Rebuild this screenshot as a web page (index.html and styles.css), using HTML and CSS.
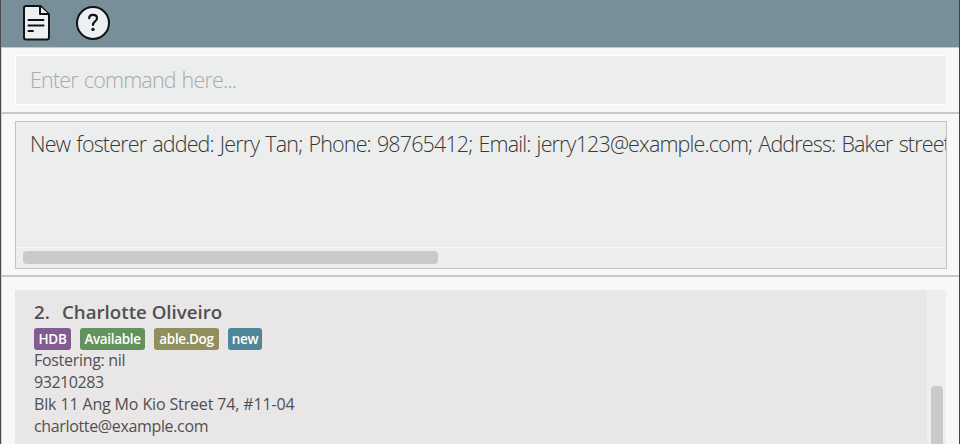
FILE: index.html
```html
<!DOCTYPE html>
<html lang="en">
<head>
<meta charset="utf-8">
<title>Address book</title>
<link rel="stylesheet" href="styles.css">
</head>
<body>
<div class="window">
  <header class="toolbar">
    <svg class="icon-file" width="29" height="36" viewBox="0 0 29 36">
      <path d="M4 1H18.500L27 9.500V32.500a2 2 0 0 1-2 2H4a2 2 0 0 1-2-2V3a2 2 0 0 1 2-2Z"/>
      <path d="M18 1.200V9H26.500M6.500 15H21.500M6.500 20.500H21.500M6.500 26H11"/>
    </svg>
    <svg class="icon-help" width="36" height="36" viewBox="0 0 36 36">
      <circle cx="18" cy="18" r="16"/>
      <path d="M14.200 13.200C14.200 8.700 22 8.700 22 13.200C22 16.700 18 16.200 18 20"/>
      <circle class="dot" cx="18" cy="24.400" r="1.700"/>
    </svg>
  </header>
  <section class="command">
    <input class="command-input" placeholder="Enter command here...">
  </section>
  <section class="result">
    <div class="result-box">
      <div class="result-text">New fosterer added: Jerry Tan; Phone: 98765412; Email: jerry123@example.com; Address: Baker street</div>
      <div class="hbar"><div class="hthumb"></div></div>
    </div>
  </section>
  <section class="list">
    <article class="card">
      <h2 class="name"><span class="num">2.</span><span>Charlotte Oliveiro</span></h2>
      <div class="tags">
        <span class="tag hdb">HDB</span>
        <span class="tag available">Available</span>
        <span class="tag dog">able.Dog</span>
        <span class="tag new">new</span>
      </div>
      <p class="line fostering">Fostering: nil</p>
      <p class="line phone">93210283</p>
      <p class="line address">Blk 11 Ang Mo Kio Street 74, #11-04</p>
      <p class="line email">charlotte@example.com</p>
    </article>
    <div class="vbar"><div class="vthumb"></div></div>
  </section>
</div>
</body>
</html>
```
FILE: styles.css
```css
* { box-sizing: border-box; }
body { margin: 0; overflow: hidden; font-family: "Open Sans", "Noto Sans", sans-serif; }
.window { width: 960px; height: 444px; display: flex; flex-direction: column; background: #f8f8f8; border-left: 1px solid #4c4a4c; border-right: 1px solid #454545; overflow: hidden; }
.toolbar { height: 47px; flex: none; display: flex; gap: 24px; padding: 5px 0 0 21px; background: #788f9a; }
svg { display: block; fill: #ecf0f2; stroke: #101416; stroke-width: 2; stroke-linecap: round; stroke-linejoin: round; }
.icon-help path { fill: none; stroke-width: 2.2; }
.icon-help .dot { fill: #101416; stroke: none; }
.command { height: 67px; flex: none; padding: 7px 12px 0 14px; border-top: 1px solid #c8c8c8; border-left: 1px solid #d4d4d4; border-bottom: 2px solid #c8c8c8; }
.command-input { display: block; width: 100%; height: 50px; border: 1px solid #fff; border-radius: 0; padding: 0 14px 2px; background: #ebeeed; font: 300 21.5px "Open Sans", sans-serif; letter-spacing: -.8px; word-spacing: 1px; color: #383838; outline: 0; }
.command-input::placeholder { color: #aaa; opacity: 1; }
.command-input, .result-box { margin-left: -1px; width: 932px; }
.result { height: 163px; flex: none; padding: 7px 12px 0 14px; border-left: 1px solid #d4d4d4; border-bottom: 2px solid #c8c8c8; }
.result-box { height: 148px; border: 1px solid #c3c3c3; background: #ebeeed; display: flex; flex-direction: column; overflow: hidden; }
.result-text { height: 125px; flex: none; padding: 8px 0 0 14px; white-space: nowrap; font-size: 21.5px; line-height: 28px; font-weight: 300; letter-spacing: -.85px; word-spacing: 1.3px; color: #383838; }
.hbar { flex: 1; padding: 3px 7px 0; background: #eee; border-top: 1px solid #f6f6f6; }
.hthumb { width: 415px; height: 13px; border-radius: 4px; background: #cacaca; }
.list { flex: 1; display: flex; padding: 13px 13px 0 13px; border-left: 1px solid #d4d4d4; }
.card { flex: 1; background: #e8e6e7; padding: 9px 0 0 19px; color: #505050; }
.name { margin: 0; height: 29px; font-size: 18.7px; font-weight: 600; line-height: 26px; display: flex; white-space: nowrap; }
.num { width: 28px; }
.tags { display: flex; gap: 9px; height: 22px; }
.tag { display: block; height: 22px; border-radius: 3px; color: #fff; font-size: 13.5px; font-weight: 600; line-height: 22px; text-align: center; white-space: nowrap; letter-spacing: -.35px; }
.hdb { width: 37px; background: #835b91; }
.available { width: 65px; background: #62925d; }
.dog { width: 65px; background: #918f5d; }
.new { width: 34px; background: #4e869a; }
.line { margin: 0; font-size: 16px; line-height: 22px; white-space: nowrap; }
.fostering { margin-top: -1px; letter-spacing: -.3px; }
.phone { letter-spacing: -.45px; }
.address { letter-spacing: -.14px; }
.email { letter-spacing: -.35px; }
.vbar { width: 19px; background: #eee; padding: 96px 3px 0 4px; }
.vthumb { height: 80px; border-radius: 4px; background: #cacaca; }
```
